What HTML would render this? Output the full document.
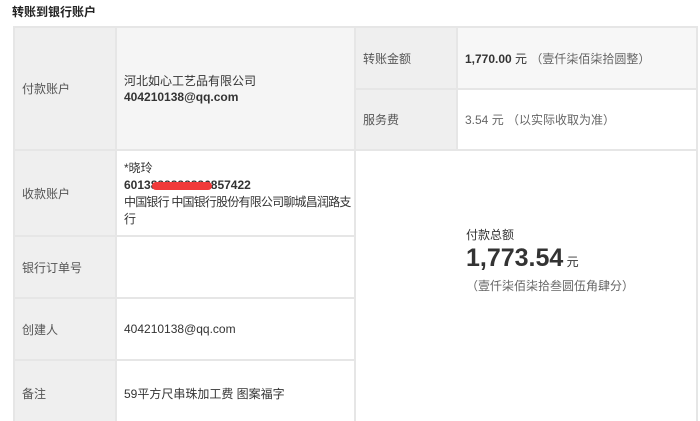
<!DOCTYPE html>
<html style="width:700px;height:421px;overflow:hidden"><head><meta charset="utf-8"><style>
*{margin:0;padding:0;box-sizing:border-box}
body{width:700px;height:421px;overflow:hidden;background:#fff;font-family:"Liberation Sans","Noto Sans CJK SC",sans-serif;font-size:12px;color:#333;position:relative}
.c{position:absolute;border-right:2px solid #e6e6e6;border-bottom:2px solid #e6e6e6;display:flex;align-items:center;padding-left:7px}
.l{background:#efefef;color:#555}
h1{position:absolute;left:12px;top:3px;font-size:12px;font-weight:bold;color:#222}
b{font-weight:bold}
.g{color:#666}
</style></head><body>
<h1>转账到银行账户</h1>
<div style="position:absolute;left:13px;top:26px;width:685px;height:2px;background:#e6e6e6"></div>
<div style="position:absolute;left:13px;top:26px;width:2px;height:395px;background:#e6e6e6"></div>
<div class="c l" style="left:15px;top:28px;width:102px;height:123px">付款账户</div>
<div class="c" style="left:117px;top:28px;width:239px;height:123px;background:#f5f5f5;line-height:16px"><div>河北如心工艺品有限公司<br><b>404210138@qq.com</b></div></div>
<div class="c l" style="left:356px;top:28px;width:102px;height:62px">转账金额</div>
<div class="c" style="left:458px;top:28px;width:240px;height:62px;background:#f7f7f7"><span><b>1,770.00</b> 元 <span class="g">（壹仟柒佰柒拾圆整）</span></span></div>
<div class="c l" style="left:356px;top:90px;width:102px;height:61px">服务费</div>
<div class="c g" style="left:458px;top:90px;width:240px;height:61px">3.54 元 （以实际收取为准）</div>
<div class="c l" style="left:15px;top:151px;width:102px;height:86px">收款账户</div>
<div class="c" style="left:117px;top:151px;width:239px;height:86px;line-height:17px;align-items:flex-start;padding-top:9px;padding-right:0"><div style="word-break:break-all">*晓玲<br><b style="position:relative">6013<span style="color:#333">88888888</span>6857422<span style="position:absolute;left:28px;top:4px;width:60px;height:8px;background:#f03a3a;border-radius:4px"></span></b><br><span style="letter-spacing:-0.8px">中国银行 中国银行股份有限公司聊城昌润路支行</span></div></div>
<div class="c" style="left:356px;top:151px;width:342px;height:270px;border-bottom:none;padding-left:110px;align-items:flex-start;padding-top:75px"><div><div>付款总额</div><div style="line-height:30px"><b style="font-size:25px;color:#333">1,773.54</b> 元</div><div class="g">（壹仟柒佰柒拾叁圆伍角肆分）</div></div></div>
<div class="c l" style="left:15px;top:237px;width:102px;height:62px">银行订单号</div>
<div class="c" style="left:117px;top:237px;width:239px;height:62px"></div>
<div class="c l" style="left:15px;top:299px;width:102px;height:62px">创建人</div>
<div class="c" style="left:117px;top:299px;width:239px;height:62px">404210138@qq.com</div>
<div class="c l" style="left:15px;top:361px;width:102px;height:60px;border-bottom:none;align-items:flex-start;padding-top:24px">备注</div>
<div class="c" style="left:117px;top:361px;width:239px;height:60px;border-bottom:none;align-items:flex-start;padding-top:24px">59平方尺串珠加工费 图案福字</div>
</body></html>
